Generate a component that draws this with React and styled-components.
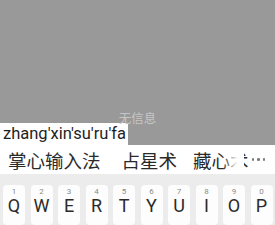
import styled, { createGlobalStyle } from 'styled-components'

const GlobalStyle = createGlobalStyle`
    html, body {
        margin: 0;
        padding: 0;
        width: 275px;
        height: 225px;
        overflow: hidden;
        font-family: Roboto, "Noto Sans CJK SC", sans-serif;
    }
`

const Screen = styled.div`
    display: flex;
    flex-direction: column;
    width: 275px;
    height: 225px;
    overflow: hidden;
`

const Backdrop = styled.div`
    display: flex;
    flex-direction: column;
    justify-content: flex-end;
    height: 152px;
    background: #999999;
`

const EmptyNote = styled.div`
    text-align: center;
    color: #c6c6c6;
    font-size: 12.5px;
    line-height: 14px;
    margin-bottom: -3px;
    position: relative;
    z-index: 1;
`

const PinyinBar = styled.div`
    width: 128px;
    height: 22px;
    background: #ffffff;
    color: #1e1e1e;
    font-size: 16.5px;
    line-height: 22px;
    padding-left: 3px;
    box-sizing: border-box;
    white-space: nowrap;
    overflow: hidden;
`

const CandidateBar = styled.div`
    display: flex;
    align-items: center;
    height: 30px;
    background: #ffffff;
    padding-left: 8px;
    position: relative;
`

const Candidate = styled.span`
    font-size: 18.5px;
    color: #2a2a2a;
    margin-right: ${({gap}) => gap}px;
    white-space: nowrap;
`

const Fade = styled.div`
    position: absolute;
    left: 222px;
    top: 0;
    width: 22px;
    height: 100%;
    background: linear-gradient(to right, rgba(255,255,255,0), #fff 70%);
`

const More = styled.div`
    position: absolute;
    right: 10px;
    top: 0;
    height: 100%;
    display: flex;
    align-items: center;
    gap: 3px;
`

const Dot = styled.span`
    width: 2.5px;
    height: 2.5px;
    border-radius: 50%;
    background: #7a7a7a;
`

const Keyboard = styled.div`
    flex: 1;
    background: #ececec;
    display: grid;
    grid-template-columns: repeat(10, 22px);
    column-gap: 5.5px;
    padding: 11px 0 0 3px;
    box-sizing: border-box;
`

const Key = styled.div`
    height: 40px;
    background: #fdfdfd;
    border-radius: 4px;
    display: flex;
    flex-direction: column;
    align-items: center;
    color: #2b2b2b;
`

const KeyNum = styled.span`
    font-size: 8px;
    line-height: 8px;
    margin-top: 3px;
    color: #8a8a8a;
`

const KeyLetter = styled.span`
    font-size: 18px;
    line-height: 19px;
`

const keys = [
    ['Q', '1'], ['W', '2'], ['E', '3'], ['R', '4'], ['T', '5'],
    ['Y', '6'], ['U', '7'], ['I', '8'], ['O', '9'], ['P', '0'],
]

function App() {
    return (
        <Screen>
            <GlobalStyle />
            <Backdrop>
                <EmptyNote>无信息</EmptyNote>
                <PinyinBar>zhang'xin'su'ru'fa</PinyinBar>
            </Backdrop>
            <CandidateBar>
                <Candidate gap={21}>掌心输入法</Candidate>
                <Candidate gap={16}>占星术</Candidate>
                <Candidate gap={0}>藏心术</Candidate>
                <Fade />
                <More>
                    <Dot />
                    <Dot />
                    <Dot />
                </More>
            </CandidateBar>
            <Keyboard>
                {keys.map(([letter, num]) => (
                    <Key key={letter}>
                        <KeyNum>{num}</KeyNum>
                        <KeyLetter>{letter}</KeyLetter>
                    </Key>
                ))}
            </Keyboard>
        </Screen>
    )
}

export default App
